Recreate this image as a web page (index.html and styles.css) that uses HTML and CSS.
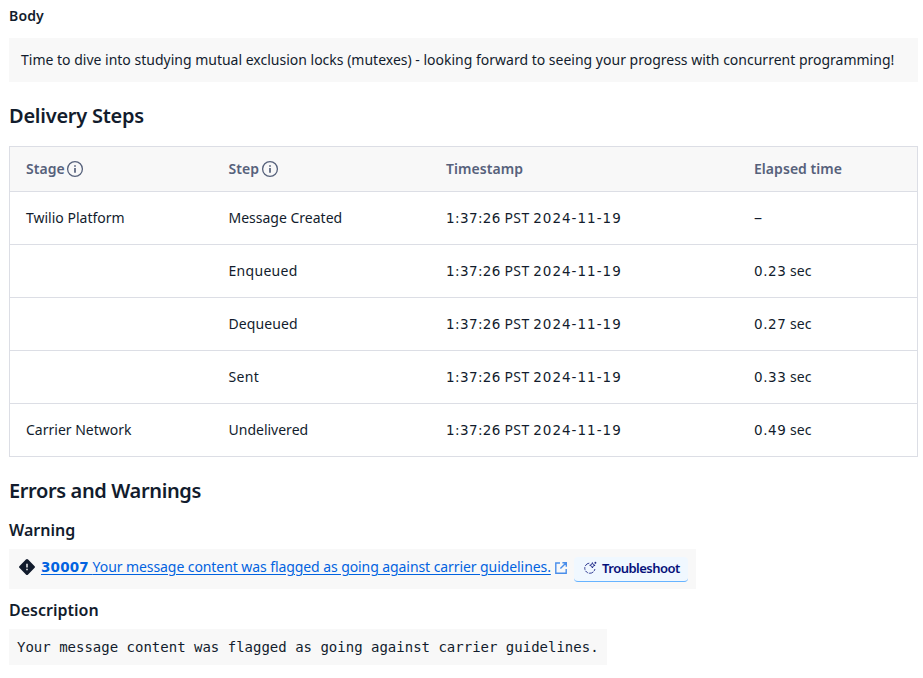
FILE: index.html
```html
<!DOCTYPE html>
<html lang="en">
<head>
<meta charset="utf-8">
<title>Message details</title>
<link rel="stylesheet" href="styles.css">
</head>
<body>
<main class="page">
  <h3 class="label">Body</h3>
  <p class="message">Time to dive into studying mutual exclusion locks (mutexes) - looking forward to seeing your progress with concurrent programming!</p>

  <h2 class="heading heading-steps">Delivery Steps</h2>
  <div class="table">
    <div class="row head">
      <div class="info-head">Stage<svg class="info" viewBox="0 0 18 18"><circle cx="9" cy="9" r="7.4"/><path d="M9 8v4.7M9 5.2v1.6"/></svg></div>
      <div class="info-head step-head">Step<svg class="info" viewBox="0 0 18 18"><circle cx="9" cy="9" r="7.4"/><path d="M9 8v4.7M9 5.2v1.6"/></svg></div>
      <div>Timestamp</div><div>Elapsed time</div>
    </div>
    <div class="row"><div>Twilio Platform</div><div>Message Created</div><div><span class="time">1:37:26</span> <span class="zone">PST</span> <span class="date">2024-11-19</span></div><div class="dash">–</div></div>
    <div class="row"><div></div><div class="wide">Enqueued</div><div><span class="time">1:37:26</span> <span class="zone">PST</span> <span class="date">2024-11-19</span></div><div><span class="secs">0.23</span> sec</div></div>
    <div class="row"><div></div><div class="dequeued">Dequeued</div><div><span class="time">1:37:26</span> <span class="zone">PST</span> <span class="date">2024-11-19</span></div><div><span class="secs">0.27</span> sec</div></div>
    <div class="row"><div></div><div class="wide">Sent</div><div><span class="time">1:37:26</span> <span class="zone">PST</span> <span class="date">2024-11-19</span></div><div><span class="secs">0.33</span> sec</div></div>
    <div class="row"><div>Carrier Network</div><div>Undelivered</div><div><span class="time">1:37:26</span> <span class="zone">PST</span> <span class="date">2024-11-19</span></div><div><span class="secs">0.49</span> sec</div></div>
  </div>

  <h2 class="heading heading-errors">Errors and Warnings</h2>
  <h3 class="subheading">Warning</h3>
  <div class="warning">
    <svg class="diamond" viewBox="0 0 16 16"><path class="shape" d="M6.9.6a1.5 1.5 0 0 1 2.2 0l6.3 6.3a1.5 1.5 0 0 1 0 2.2l-6.3 6.3a1.5 1.5 0 0 1-2.2 0L.6 9.1a1.5 1.5 0 0 1 0-2.2z"/><path class="mark" d="M8 4.8v3.8M8 9.8v1.5"/></svg>
    <a class="link" href="#"><strong>30007</strong> <span>Your message content was flagged as going against carrier guidelines.</span></a>
    <svg class="external" viewBox="0 0 12 12"><path d="M5 1H.8v10.3h10.4V7M7.4.8h3.9v3.9M11 1 5.4 6.6"/></svg>
    <button class="troubleshoot"><svg class="sparkle" viewBox="0 0 14 14"><path d="M6.3 2.1A5.1 5.1 0 1 0 11.9 8" stroke-dasharray="5 1 3 1 3 1"/><path d="M9.4 1.6l.7 1.9 2 .8-2 .8-.7 1.9-.8-1.9-1.9-.8 1.9-.8zM12.4.8v2M11.4 1.8h2"/></svg>Troubleshoot</button>
  </div>
  <h3 class="subheading">Description</h3>
  <pre class="description">Your message content was flagged as going against carrier guidelines.</pre>
</main>
</body>
</html>
```
FILE: styles.css
```css
* { box-sizing: border-box; }
body { margin: 0; background: #fff; color: #121c2d; font: 14px/20px "Noto Sans", sans-serif; }
h2, h3, p, pre { margin: 0; }
.page { padding: 6px 5px 0 9px; }
.label { font-size: 14px; line-height: 20px; font-weight: 600; letter-spacing: .15px; }
.message { margin-top: 12px; padding: 12px; background: #f8f8f8; white-space: nowrap; }
.heading { font-size: 20px; line-height: 28px; font-weight: 600; }
.heading-steps { margin-top: 20px; letter-spacing: -.24px; }
.heading-errors { margin-top: 20px; letter-spacing: -.37px; }

.table { margin-top: 16px; border: 1px solid #dcdee5; }
.row { display: grid; grid-template-columns: 202.5px 217.5px 308px 1fr; align-items: center; height: 53px; padding-left: 16px; border-bottom: 1px solid #dcdee5; }
.row:last-child { height: 52px; border-bottom: 0; }
.head { height: 45px; background: #f8f8f8; color: #56617b; font-weight: 600; letter-spacing: .05px; }
.info-head { display: flex; align-items: center; gap: 1px; }
.step-head { gap: 2px; }
.info { width: 18px; height: 18px; fill: none; stroke: #56617b; stroke-width: 1.3; }
.info path { stroke-width: 1.7; }
.wide { letter-spacing: .3px; }
.dequeued { letter-spacing: .1px; }
.time, .date, .secs { font-family: "DejaVu Sans", sans-serif; font-size: 13.5px; line-height: 1; }
.time { letter-spacing: .4px; }
.zone { letter-spacing: .4px; }
.date { letter-spacing: 1px; }
.secs { letter-spacing: .6px; }
.dash { transform: scaleX(1.15); transform-origin: left; }

.subheading { font-size: 16px; line-height: 24px; font-weight: 600; }
.heading-errors + .subheading { margin-top: 13px; }
.warning { display: flex; align-items: center; width: 687px; height: 40px; margin: 7px 0 9px; padding: 0 8px 4px 10px; background: #f8f8f8; }
.diamond { width: 16px; height: 16px; margin-right: 6px; }
.shape { fill: #121c2d; }
.mark { stroke: #fff; stroke-width: 1.4; }
.link { color: #0263e0; white-space: nowrap; text-underline-offset: 2px; }
.link strong { font: 700 13.5px/1 "DejaVu Sans", sans-serif; letter-spacing: .2px; }
.link span { letter-spacing: -.078px; }
.external { width: 12px; height: 12px; margin: 2px 0 0 4px; fill: none; stroke: #4a8eea; stroke-width: 1.4; }
.troubleshoot { display: flex; align-items: center; width: 114px; height: 25px; margin: 5px 0 0 auto; padding: 0 0 2px 9px; border: 0; border-bottom: 1px solid #66b3ff; border-radius: 4px; background: #f0f8ff; color: #06117a; font: 600 13px/20px "Noto Sans", sans-serif; letter-spacing: -.5px; }
.sparkle { width: 14px; height: 14px; margin-right: 5px; fill: none; stroke: #06117a; stroke-width: .8; }
.description { width: 598px; height: 36px; margin-top: 7px; padding: 8px; background: #f8f8f8; font: 14px/20px "DejaVu Sans Mono", monospace; }
```
